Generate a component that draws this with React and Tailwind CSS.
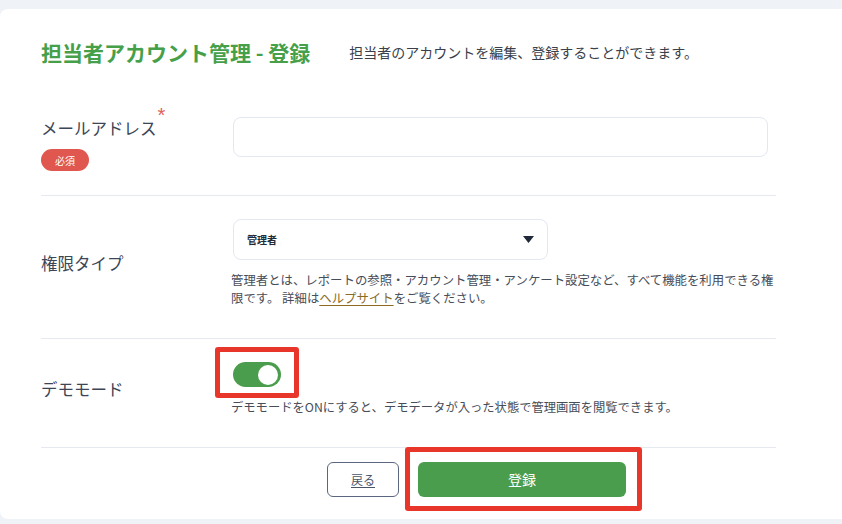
import React from 'react';

const font = "font-['Noto_Sans_CJK_JP','Noto_Sans',sans-serif]";

function Toggle({ on }) {
    return (
        <div className={`w-[48px] h-[25px] rounded-full flex items-center px-[3px] ${on ? 'bg-[#4a9d4c] justify-end' : 'bg-[#cbd2dc] justify-start'}`}>
            <div className="w-[20px] h-[20px] rounded-full bg-white" />
        </div>
    );
}

export default function App() {
    return (
        <div className={`h-screen bg-[#eff3f8] pt-[9px] overflow-hidden ${font}`}>
            <div className="w-[860px] h-[510px] bg-white rounded-l-lg pl-[41px]">
                <div className="flex items-center gap-[39px] pt-[29px] h-[57px]">
                    <h1 className="text-[21px] leading-[28px] font-bold text-[#46a049]">担当者アカウント管理 - 登録</h1>
                    <p className="text-[14px] leading-[20px] text-[#3a3f4a]">担当者のアカウントを編集、登録することができます。</p>
                </div>

                <div className="w-[735px]">
                    {/* メールアドレス */}
                    <div className="grid grid-cols-[190px_545px] items-start pt-[51px] pb-[24px] border-b border-[#e6eaf0]">
                        <div className="mt-[-1px]">
                            <div className="relative inline-block text-[16.5px] leading-[24px] text-[#3d4656]">
                                メールアドレス
                                <span className="absolute left-full ml-[1px] top-[-11px] font-['Liberation_Sans',sans-serif] text-[20px] leading-none text-[#e0605a]">*</span>
                            </div>
                            <div className="mt-[9px] w-[48px] h-[22px] rounded-full bg-[#e0574f] text-white text-[10px] flex items-center justify-center">必須</div>
                        </div>
                        <input type="text" className="ml-[2px] w-[535px] h-[40px] rounded-lg border border-[#e3e7f0] outline-none" />
                    </div>

                    {/* 権限タイプ */}
                    <div className="grid grid-cols-[190px_545px] items-center pt-[23px] pb-[31px] border-b border-[#e6eaf0]">
                        <div className="text-[16.5px] leading-[24px] text-[#3d4656]">権限タイプ</div>
                        <div>
                            <div className="ml-[2px] w-[315px] h-[41px] rounded-lg border border-[#e3e7f0] flex items-center justify-between pl-[13px] pr-[13px]">
                                <span className="text-[10px] font-bold text-[#222a35]">管理者</span>
                                <svg width="11" height="7" viewBox="0 0 11 7"><path d="M0 0h11L5.5 7z" fill="#1e2a3a" /></svg>
                            </div>
                            <p className="mt-[11px] w-[552px] text-[12.4px] leading-[18px] text-[#474d58]">
                                管理者とは、レポートの参照・アカウント管理・アンケート設定など、すべて機能を利用できる権限です。 詳細は<a href="#" className="text-[#8a6a1e] underline underline-offset-2">ヘルプサイト</a>をご覧ください。
                            </p>
                        </div>
                    </div>

                    {/* デモモード */}
                    <div className="grid grid-cols-[190px_545px] items-center pt-[23px] pb-[31px] border-b border-[#e6eaf0]">
                        <div className="text-[16.5px] leading-[24px] text-[#3d4656]">デモモード</div>
                        <div>
                            <div className="relative ml-[2px] w-[48px]">
                                <Toggle on />
                                <div className="absolute left-[-18px] top-[-15px] right-[-18px] bottom-[-11px] border-[5px] border-[#e8372a] rounded-[3px]" />
                            </div>
                            <p className="mt-[11px] text-[12.3px] leading-[18px] text-[#474d58]">デモモードをONにすると、デモデータが入った状態で管理画面を閲覧できます。</p>
                        </div>
                    </div>

                    {/* buttons */}
                    <div className="flex items-center gap-[19px] pt-[14px] pl-[286px]">
                        <button className="w-[72px] h-[35px] rounded-md border border-[#5b6780] text-[12px] text-[#4a5568] underline underline-offset-2">戻る</button>
                        <div className="relative">
                            <button className="w-[208px] h-[35px] rounded-md bg-[#4a9d4c] text-white text-[14px]">登録</button>
                            <div className="absolute left-[-13px] top-[-15px] right-[-16px] bottom-[-14px] border-[5px] border-[#e8372a] rounded-[3px]" />
                        </div>
                    </div>
                </div>
            </div>
        </div>
    );
}
